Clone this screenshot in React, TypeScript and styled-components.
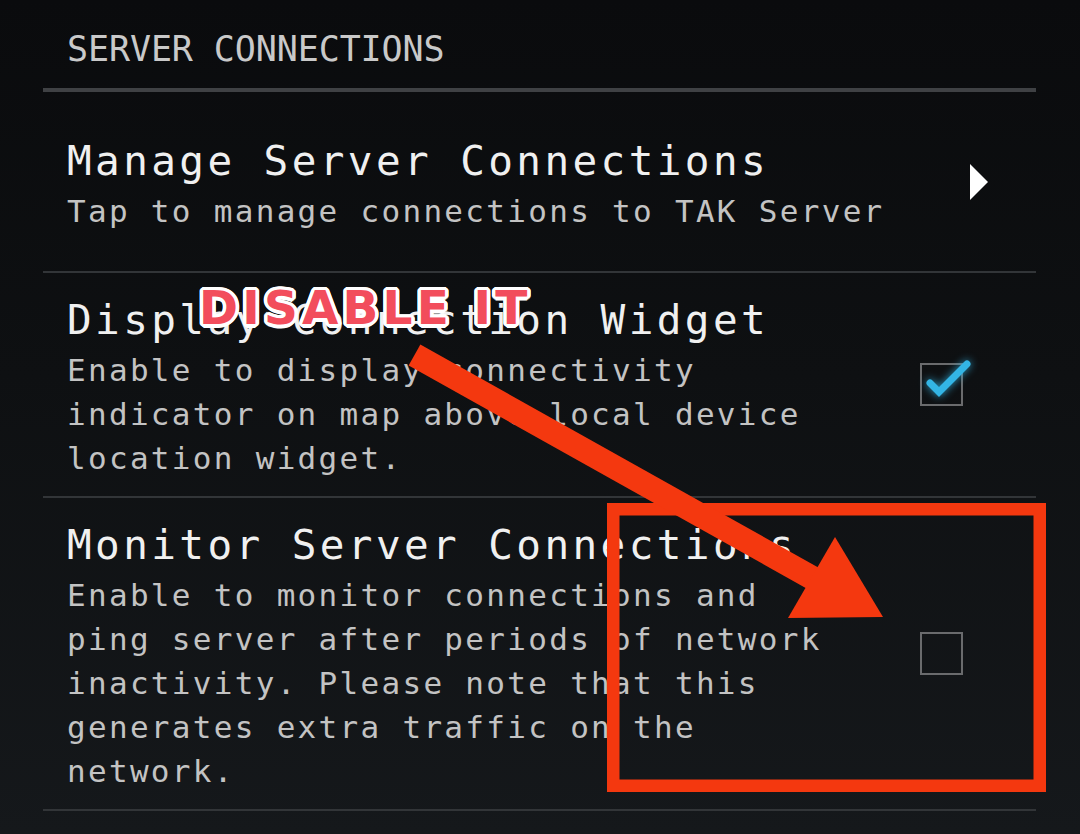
import styled, { createGlobalStyle } from "styled-components";

const GlobalStyle = createGlobalStyle`
  html, body {
    margin: 0;
    padding: 0;
    background: #0a0b0d;
  }
`;

const outline = Array.from({ length: 16 }, (_, i) => {
  const a = (i / 16) * Math.PI * 2;
  return `${(Math.cos(a) * 3.5).toFixed(2)}px ${(Math.sin(a) * 3.5).toFixed(2)}px 0 #ffffff`;
}).join(", ");

const Screen = styled.div`
  position: relative;
  width: 1080px;
  height: 834px;
  overflow: hidden;
  box-sizing: border-box;
  padding: 0 44px 0 43px;
  background: linear-gradient(180deg, #0a0b0d 0%, #0e1012 45%, #15181b 100%);
  font-family: "DejaVu Sans Mono", "Liberation Mono", monospace;
`;

const CategoryHeader = styled.h2`
  margin: 0;
  padding: 29px 24px 19px;
  border-bottom: 4px solid #3f4144;
  color: #c9c9c9;
  font-size: 35px;
  line-height: 40px;
  font-weight: normal;
  letter-spacing: -0.1px;
`;

const PrefRow = styled.div`
  display: flex;
  align-items: stretch;
  border-bottom: 2px solid #323538;
`;

const TextBlock = styled.div<{ $spacious?: boolean }>`
  flex: 1 1 0%;
  min-width: 0;
  padding: ${(p) => (p.$spacious ? "45px 0 38px 24px" : "23px 0 16px 24px")};
`;

const Title = styled.div`
  color: #f0f0f0;
  font-size: 41px;
  line-height: 48px;
  letter-spacing: 3.4px;
  white-space: nowrap;
`;

const Summary = styled.div`
  margin-top: 4px;
  color: #c3c3c3;
  font-size: 31px;
  line-height: 44px;
  letter-spacing: 2.3px;
`;

const Action = styled.div<{ $width: number }>`
  display: flex;
  flex: none;
  width: ${(p) => p.$width}px;
  justify-content: center;
  align-items: center;
`;

const Chevron = styled.span`
  width: 0;
  height: 0;
  border-left: 18px solid #ffffff;
  border-top: 18.5px solid transparent;
  border-bottom: 18.5px solid transparent;
`;

const CheckBox = styled.span`
  position: relative;
  display: block;
  width: 43px;
  height: 43px;
  box-sizing: border-box;
  border: 2px solid #6a6b6d;
`;

const CheckMark = styled.svg`
  position: absolute;
  top: -2px;
  left: -2px;
  overflow: visible;
  filter: drop-shadow(0 0 4px rgba(51, 181, 229, 0.85));
`;

const Annotations = styled.svg`
  position: absolute;
  top: 0;
  left: 0;
  pointer-events: none;
`;

const Callout = styled.div`
  position: absolute;
  top: 284px;
  left: 199px;
  color: #f24d5c;
  font-family: "DejaVu Sans", "Liberation Sans", sans-serif;
  font-weight: bold;
  font-size: 47px;
  line-height: 47px;
  letter-spacing: 4.2px;
  white-space: nowrap;
  text-shadow: ${outline};
`;

const Check = ({ checked }: { checked: boolean }) => (
  <CheckBox>
    {checked && (
      <CheckMark width={50} height={36} viewBox="0 0 50 36">
        <polyline
          points="10,20 19,29 47,1"
          fill="none"
          stroke="#33b5e5"
          strokeWidth={7}
          strokeLinejoin="miter"
          strokeLinecap="round"
        />
      </CheckMark>
    )}
  </CheckBox>
);

const App = () => (
  <>
    <GlobalStyle />
    <Screen>
      <CategoryHeader>SERVER CONNECTIONS</CategoryHeader>

      <PrefRow>
        <TextBlock $spacious>
          <Title>Manage Server Connections</Title>
          <Summary>Tap to manage connections to TAK Server</Summary>
        </TextBlock>
        <Action $width={114}>
          <Chevron />
        </Action>
      </PrefRow>

      <PrefRow>
        <TextBlock>
          <Title>Display Connection Widget</Title>
          <Summary>
            Enable to display connectivity indicator on map above local device
            location widget.
          </Summary>
        </TextBlock>
        <Action $width={189}>
          <Check checked />
        </Action>
      </PrefRow>

      <PrefRow>
        <TextBlock>
          <Title>Monitor Server Connections</Title>
          <Summary>
            Enable to monitor connections and ping server after periods of
            network inactivity. Please note that this generates extra traffic
            on the network.
          </Summary>
        </TextBlock>
        <Action $width={189}>
          <Check checked={false} />
        </Action>
      </PrefRow>

      <Annotations width={1080} height={834} viewBox="0 0 1080 834">
        <rect
          x={613.25}
          y={509.25}
          width={426.5}
          height={276.5}
          fill="none"
          stroke="#f4380f"
          strokeWidth={12.5}
        />
        <line
          x1={414.5}
          y1={355}
          x2={816}
          y2={580}
          stroke="#f4380f"
          strokeWidth={24}
        />
        <polygon points="835,537 788,618 883,617" fill="#f4380f" />
      </Annotations>

      <Callout>DISABLE IT</Callout>
    </Screen>
  </>
);

export default App;
